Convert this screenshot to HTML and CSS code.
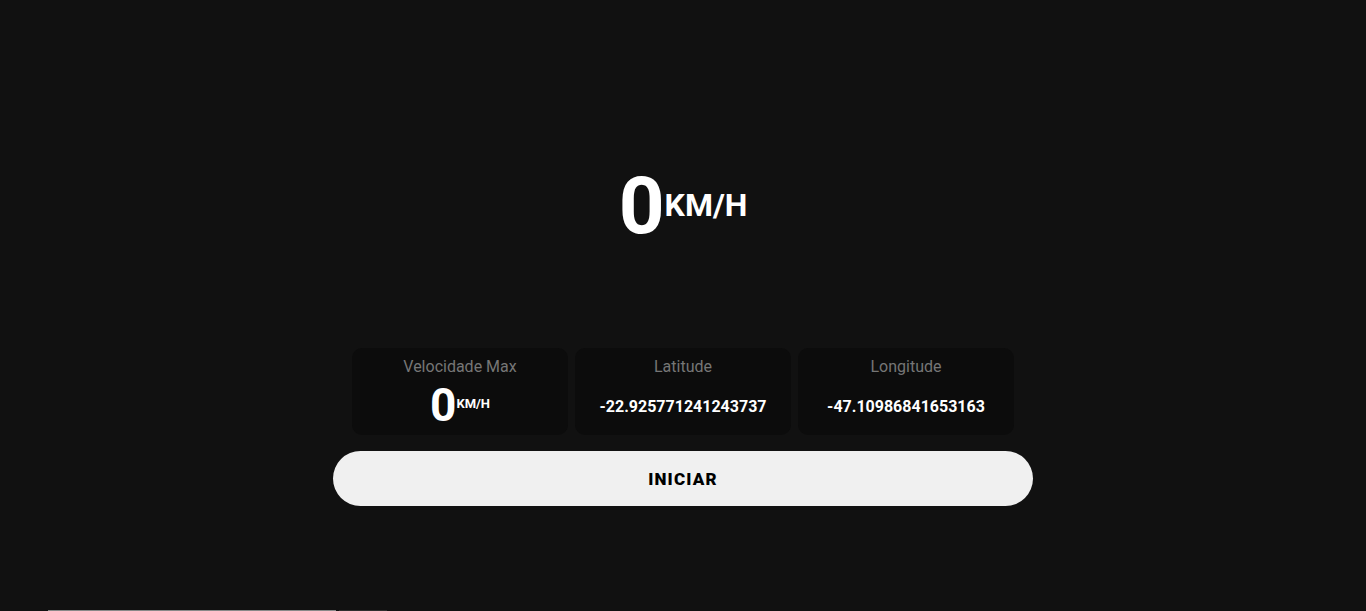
FILE: index.html
```html
<!DOCTYPE html>
<html lang="pt-BR">
<head>
<meta charset="utf-8">
<title>Velocímetro</title>
<link rel="stylesheet" href="styles.css">
</head>
<body>
<main class="app">
  <div class="speed">
    <span class="speed-value">0</span><span class="speed-unit">KM/H</span>
  </div>
  <section class="cards">
    <div class="card">
      <div class="card-label">Velocidade Max</div>
      <div class="card-body">
        <span class="max-value">0</span><span class="max-unit">KM/H</span>
      </div>
    </div>
    <div class="card">
      <div class="card-label">Latitude</div>
      <div class="card-body"><span class="coord">-22.925771241243737</span></div>
    </div>
    <div class="card">
      <div class="card-label">Longitude</div>
      <div class="card-body"><span class="coord">-47.10986841653163</span></div>
    </div>
  </section>
  <button class="start-btn">INICIAR</button>
</main>
<footer class="bottom-bars">
  <div class="bar bar-light"></div>
  <div class="bar bar-dark"></div>
</footer>
</body>
</html>
```

FILE: styles.css
```css
html, body {
  margin: 0;
  padding: 0;
  height: 100%;
  overflow: hidden;
}
body {
  background: #111111;
  color: #ffffff;
  font-family: Roboto, "Liberation Sans", Arial, sans-serif;
}
.app {
  display: flex;
  flex-direction: column;
  align-items: center;
  padding-top: 166px;
}
.speed {
  display: flex;
  align-items: flex-start;
  font-weight: 700;
}
.speed-value {
  font-size: 80px;
  line-height: 80px;
}
.speed-unit {
  font-size: 32px;
  line-height: 32px;
  margin-top: 23px;
}
.cards {
  display: flex;
  gap: 7px;
  margin-top: 102px;
}
.card {
  width: 216px;
  height: 87px;
  box-sizing: border-box;
  padding: 9px 0 0;
  background: #0c0c0c;
  border-radius: 10px;
  display: flex;
  flex-direction: column;
  align-items: center;
}
.card-label {
  font-size: 16px;
  line-height: 20px;
  color: #767676;
}
.card-body {
  flex: 1;
  display: flex;
  align-items: center;
  justify-content: center;
  font-weight: 700;
}
.max-value {
  font-size: 46px;
  line-height: 46px;
  margin-bottom: 3px;
}
.max-unit {
  font-size: 13px;
  line-height: 13px;
  align-self: flex-start;
  margin-top: 20px;
}
.coord {
  font-size: 16px;
  line-height: 20px;
  margin-top: 2px;
}
.start-btn {
  margin-top: 16px;
  padding: 0;
  width: 700px;
  height: 55px;
  border: none;
  border-radius: 28px;
  background: #f0f0f0;
  color: #000000;
  font-family: Roboto, "Liberation Sans", Arial, sans-serif;
  font-weight: 900;
  font-size: 17px;
  letter-spacing: 1.2px;
  cursor: pointer;
}
.bottom-bars {
  display: flex;
  gap: 3px;
  padding-left: 48px;
  margin-top: 104px;
}
.bar {
  height: 4px;
}
.bar-light {
  width: 288px;
  background: #888888;
}
.bar-dark {
  width: 48px;
  background: #2f2f2f;
}
```
